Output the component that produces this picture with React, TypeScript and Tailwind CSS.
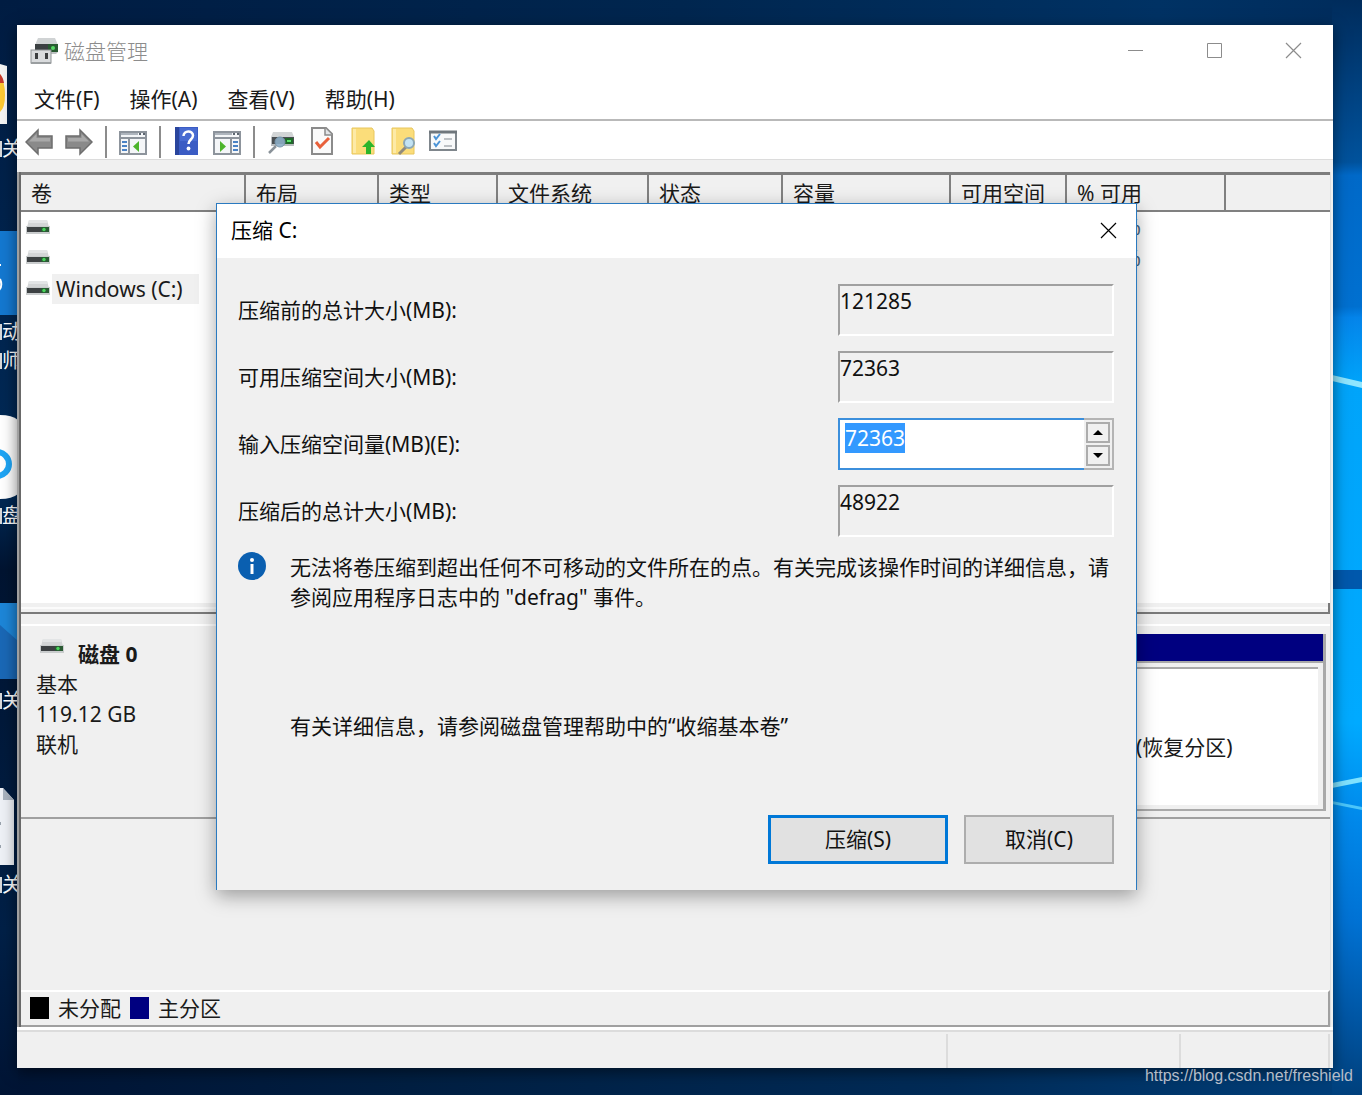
import { useEffect, useRef, useState } from 'react'

const columns = [
  { name: '卷', width: 'w-[224px]' },
  { name: '布局', width: 'w-[133px]' },
  { name: '类型', width: 'w-[119px]' },
  { name: '文件系统', width: 'w-[151px]' },
  { name: '状态', width: 'w-[134px]' },
  { name: '容量', width: 'w-[168px]' },
  { name: '可用空间', width: 'w-[116px]' },
  { name: '% 可用', width: 'w-[159px]' },
  { name: '', width: '' },
]

const volumes = [
  { name: '', free: '100 %' },
  { name: '', free: '100 %' },
  { name: 'Windows (C:)', free: '' },
]

const menus = ['文件(F)', '操作(A)', '查看(V)', '帮助(H)']

function DriveIcon() {
  return (
    <svg width="24" height="16" viewBox="0 0 24 16" className="shrink-0">
      <path d="M3 0h18l2 7H1z" fill="#d3d5d6" />
      <path d="M3 0h18l.6 3H2.4z" fill="#e3e5e6" />
      <rect x="0" y="6" width="24" height="8" fill="#c9cccd" />
      <rect x="1" y="7" width="22" height="5" fill="#3d4143" />
      <rect x="15" y="7" width="8" height="5" fill="#2a5a33" />
      <circle cx="18" cy="9.500" r="1.700" fill="#49d65c" />
    </svg>
  )
}

function AppIcon() {
  return (
    <svg width="28" height="28" viewBox="0 0 28 28" className="shrink-0">
      <path d="M8 1h17l3 7H5z" fill="#d0d3d4" />
      <rect x="5" y="7" width="23" height="8" fill="#3c4143" />
      <path d="M18 7h10v8H18z" fill="#285a31" />
      <circle cx="23" cy="11" r="2" fill="#55d964" />
      <path d="M5 15h23l-2 2H5z" fill="#bfc2c3" />
      <rect x="1" y="13" width="20" height="13" fill="#d9dbdd" stroke="#8f9496" />
      <path d="M1 25h20v2H1z" fill="#9a9ea0" />
      <rect x="5" y="16" width="3" height="6" fill="#3b3d3f" />
      <rect x="15" y="16" width="3" height="6" fill="#3b3d3f" />
    </svg>
  )
}

function ArrowIcon({ flip = false }: { flip?: boolean }) {
  return (
    <svg width="28" height="30" viewBox="0 0 28 30" className={flip ? '-scale-x-100' : ''}>
      <path d="M1 15 13 3v6h14v12H13v6z" fill="#8a8a8a" stroke="#6e6e6e" strokeWidth="1.500" />
      <path d="M4 14.500 11.500 7v4H25v3.500z" fill="#a9a9a9" />
    </svg>
  )
}

function PanelIcon({ right = false }: { right?: boolean }) {
  return (
    <svg width="28" height="30" viewBox="0 0 28 30">
      <rect x="1" y="5" width="26" height="22" fill="#f4f6f8" stroke="#8d949c" strokeWidth="2" />
      <path d="M2 7h17" stroke="#aeb5bd" strokeWidth="2" />
      <path d="M20 7h2M24 7h2" stroke="#5d6670" strokeWidth="2" />
      <path d="M1 11h26" stroke="#8d949c" strokeWidth="2" />
      {right ? (
        <>
          <path d="M18 12v15" stroke="#8d949c" strokeWidth="2" />
          <path d="M20 15h5M20 19h5M20 23h5" stroke="#4a82c4" strokeWidth="2" />
          <path d="M7 14v11l6-5.500z" fill="#4cb42c" />
        </>
      ) : (
        <>
          <path d="M10 12v15" stroke="#8d949c" strokeWidth="2" />
          <path d="M3 15h5M3 19h5M3 23h5" stroke="#4a82c4" strokeWidth="2" />
          <path d="M20 14v11l-6-5.500z" fill="#4cb42c" />
        </>
      )}
    </svg>
  )
}

function HelpIcon() {
  return (
    <svg width="28" height="30" viewBox="0 0 28 30">
      <rect x="2" y="0" width="23" height="28" fill="#3b5cc4" />
      <rect x="2" y="0" width="4" height="28" fill="#2a459d" />
      <path d="M7 1h17v13H7z" fill="#5275da" opacity=".6" />
      <path d="M10.500 9c0-6 9.500-6 9.500-.5 0 4-4.500 4-4.500 8.500" fill="none" stroke="#fff" strokeWidth="2.500" />
      <circle cx="15.500" cy="21.500" r="1.900" fill="#fff" />
    </svg>
  )
}

function DiskSearchIcon() {
  return (
    <svg width="28" height="30" viewBox="0 0 28 30">
      <path d="M6 5h19l2 5H4z" fill="#d2d5d6" />
      <rect x="4" y="10" width="23" height="9" fill="#b9bdbf" />
      <rect x="5" y="10" width="22" height="7" fill="#4a4f52" />
      <rect x="18" y="11" width="8" height="6" fill="#1f6a2a" />
      <path d="M20 14h4" stroke="#5be36b" strokeWidth="2" />
      <path d="m9 19-7 7" stroke="#8a9299" strokeWidth="2.500" />
      <circle cx="13" cy="15" r="5" fill="#8fb3cc" fillOpacity=".85" stroke="#7896ab" />
    </svg>
  )
}

function CheckDocIcon() {
  return (
    <svg width="28" height="30" viewBox="0 0 28 30">
      <path d="M5 1h14l6 6v20H5z" fill="#fafafa" stroke="#8b8b8b" strokeWidth="2" />
      <path d="M18 1v7h7" fill="#e2e5e8" stroke="#8b8b8b" strokeWidth="1.500" />
      <path d="m9 15 4 5 9-9" fill="none" stroke="#e8603a" strokeWidth="3" />
    </svg>
  )
}

function FolderUpIcon() {
  return (
    <svg width="28" height="30" viewBox="0 0 28 30">
      <path d="M5 1h20l2 3v23H5z" fill="#fbdd7a" stroke="#e8c65c" />
      <path d="M6 2h3v24H6z" fill="#fdeaa6" />
      <path d="m22 13 6 7h-4v7h-5v-7h-4z" fill="#2bb52b" />
    </svg>
  )
}

function FolderSearchIcon() {
  return (
    <svg width="28" height="30" viewBox="0 0 28 30">
      <path d="M5 1h20l2 3v23H5z" fill="#fbdd7a" stroke="#e8c65c" />
      <path d="M6 2h3v24H6z" fill="#fdeaa6" />
      <path d="m19 20-7 7" stroke="#918b7c" strokeWidth="3" />
      <circle cx="22" cy="16" r="5" fill="#c3e3f3" stroke="#8ca7b5" strokeWidth="2" />
    </svg>
  )
}

function ListIcon() {
  return (
    <svg width="30" height="30" viewBox="0 0 30 30">
      <rect x="3" y="5" width="26" height="18" fill="#f8f9fa" stroke="#7f868c" strokeWidth="2" />
      <path d="M2 5h28" stroke="#6f767c" strokeWidth="3" />
      <path d="m7 9 2 3 4-5M7 16l2 3 4-5" fill="none" stroke="#4b93d6" strokeWidth="2" />
      <path d="M17 12h8M17 19h8" stroke="#bdc1c5" strokeWidth="2" />
    </svg>
  )
}

function CloseIcon() {
  return (
    <svg width="17" height="17" viewBox="0 0 17 17">
      <path d="m1 1 15 15M16 1 1 16" stroke="currentColor" strokeWidth="1.200" />
    </svg>
  )
}

function Wallpaper() {
  return (
    <svg className="absolute inset-0 h-full w-full" viewBox="0 0 1362 1095" preserveAspectRatio="none">
      <defs>
        <linearGradient id="top" x1="0" x2="1" y1="0" y2="0">
          <stop offset="0" stopColor="#001c42" />
          <stop offset=".5" stopColor="#00264f" />
          <stop offset=".85" stopColor="#003264" />
          <stop offset="1" stopColor="#002c5c" />
        </linearGradient>
        <linearGradient id="bottom" x1="0" x2="1" y1="0" y2="0">
          <stop offset="0" stopColor="#001434" />
          <stop offset=".3" stopColor="#001f42" />
          <stop offset=".7" stopColor="#002b57" />
          <stop offset="1" stopColor="#00407c" />
        </linearGradient>
        <linearGradient id="left" x1="0" x2="0" y1="0" y2="1">
          <stop offset="0" stopColor="#001c42" />
          <stop offset=".45" stopColor="#002a57" />
          <stop offset=".52" stopColor="#001431" />
          <stop offset=".85" stopColor="#002047" />
          <stop offset="1" stopColor="#001434" />
        </linearGradient>
        <linearGradient id="right" x1="0" x2="0" y1="0" y2="1">
          <stop offset="0" stopColor="#002c5c" />
          <stop offset=".148" stopColor="#00529c" />
          <stop offset=".16" stopColor="#0069c8" />
          <stop offset=".28" stopColor="#0070d0" />
          <stop offset=".29" stopColor="#0484ea" />
          <stop offset=".35" stopColor="#00a4fa" />
          <stop offset=".66" stopColor="#00aaff" />
          <stop offset=".75" stopColor="#0088ea" />
          <stop offset=".84" stopColor="#0072d4" />
          <stop offset=".93" stopColor="#0056a4" />
          <stop offset="1" stopColor="#00407c" />
        </linearGradient>
      </defs>
      <rect width="1362" height="548" fill="url(#top)" />
      <rect y="548" width="1362" height="547" fill="url(#bottom)" />
      <rect width="18" height="1095" fill="url(#left)" />
      <rect x="1332" width="30" height="1095" fill="url(#right)" />
      <rect x="1332" y="570" width="30" height="19" fill="#0058ac" />
      <path d="m1332 375 30 7v6l-30-7z" fill="#8fe6ff" />
      <path d="m1332 783 30-6v5l-30 6z" fill="#7fe2ff" />
      <path d="m1332 801 30 6v3l-30-6z" fill="#4cc6fa" />
    </svg>
  )
}

function DesktopLabel({ text, className }: { text: string; className: string }) {
  return (
    <div className={`absolute left-0 flex items-center text-[20px] leading-[28px] text-white ${className}`}>
      <span className="h-4 w-0.5 bg-[#d9d9d9]" />
      {text}
    </div>
  )
}

function Desktop() {
  return (
    <div className="absolute inset-0 overflow-hidden">
      <Wallpaper />
      <svg className="absolute top-[64px] left-0" width="7" height="60" viewBox="0 0 7 60">
        <path d="M0 0 7 2v58H0z" fill="#f4f4f4" />
        <path d="M0 10q5 8 5 21T0 48z" fill="#fcc934" />
        <path d="M0 10q3 3 4 9H0z" fill="#c5392c" />
      </svg>
      <DesktopLabel text="关" className="top-[135px]" />
      <svg className="absolute top-[231px] left-0" width="18" height="84" viewBox="0 0 18 84">
        <rect width="18" height="84" fill="#1478d0" />
        <path d="M0 35v-2M0 48q3 7-1 11" fill="none" stroke="#fff" strokeWidth="2" />
      </svg>
      <DesktopLabel text="动" className="top-[318px]" />
      <DesktopLabel text="师" className="top-[347px]" />
      <svg className="absolute top-[415px] left-0" width="18" height="84" viewBox="0 0 18 84">
        <path d="M0 0q12 0 18 5v74q-6 5-18 5z" fill="#fff" />
        <circle cx="-3" cy="49" r="12" fill="none" stroke="#1ea5f5" strokeWidth="6" />
      </svg>
      <DesktopLabel text="盘" className="top-[502px]" />
      <svg className="absolute top-[603px] left-0" width="18" height="76" viewBox="0 0 18 76">
        <rect width="18" height="76" fill="#1d86d8" />
        <path d="m0 22 18 16v38H0z" fill="#1a68b6" />
      </svg>
      <DesktopLabel text="关" className="top-[687px]" />
      <svg className="absolute top-[788px] left-0" width="14" height="77" viewBox="0 0 14 77">
        <path d="M0 0h3l11 12v65H0z" fill="#eef1f6" />
        <path d="M3 0v12h11z" fill="#a9b3bf" />
        <path d="M0 34v3M0 57v3" stroke="#9aa3ad" strokeWidth="2" />
      </svg>
      <DesktopLabel text="关" className="top-[871px]" />
    </div>
  )
}

function ResultRow({ id, label, value }: { id: string; label: string; value: number }) {
  return (
    <div className="flex items-center justify-between">
      <label htmlFor={id}>{label}</label>
      <output
        id={id}
        className="block h-[52px] w-[276px] border-2 border-t-[#a0a0a0] border-r-white border-b-white border-l-[#a0a0a0]"
      >
        {value}
      </output>
    </div>
  )
}

function ShrinkDialog() {
  const total = 121285
  const available = 72363
  const [amount, setAmount] = useState(available)
  const inputRef = useRef<HTMLInputElement>(null)

  useEffect(() => {
    inputRef.current?.focus()
    inputRef.current?.select()
  }, [])

  const step = (delta: number) => setAmount((n) => Math.min(available, Math.max(0, n + delta)))

  return (
    <div
      role="dialog"
      aria-label="压缩 C:"
      className="absolute top-[178px] left-[199px] w-[921px] border border-b-0 border-[#2a7ac0] bg-[#f0f0f0] text-[#111111] shadow-[0_6px_18px_rgba(0,0,0,0.35)]"
    >
      <div className="flex h-[54px] items-center justify-between bg-white pr-[19px] pb-0.5 pl-3.5 text-black">
        <h2>压缩 C:</h2>
        <button aria-label="关闭">
          <CloseIcon />
        </button>
      </div>

      <form className="pt-[26px] pr-[22px] pb-[26px] pl-[21px]" onSubmit={(e) => e.preventDefault()}>
        <div className="flex flex-col gap-[15px]">
          <ResultRow id="total" label="压缩前的总计大小(MB):" value={total} />
          <ResultRow id="available" label="可用压缩空间大小(MB):" value={available} />
          <div className="flex items-center justify-between">
            <label htmlFor="amount">输入压缩空间量(MB)(E):</label>
            <div className="flex h-[52px] w-[276px]">
              <input
                id="amount"
                ref={inputRef}
                value={amount}
                onChange={(e) => setAmount(Number(e.target.value) || 0)}
                className="min-w-0 flex-1 border-2 border-r-0 border-[#3c8fdc] bg-white px-[5px] pt-[3px] pb-[15px] outline-none selection:bg-[#3399ff] selection:text-white"
              />
              <div className="flex w-[30px] flex-col gap-0.5 border-2 border-l-0 border-[#b4b4b4] p-0.5">
                <button
                  type="button"
                  aria-label="增加"
                  onClick={() => step(1)}
                  className="flex flex-1 items-center justify-center border-2 border-[#acacac]"
                >
                  <svg width="10" height="5" viewBox="0 0 10 5">
                    <path d="m5 0 5 5H0z" />
                  </svg>
                </button>
                <button
                  type="button"
                  aria-label="减少"
                  onClick={() => step(-1)}
                  className="flex flex-1 items-center justify-center border-2 border-[#acacac]"
                >
                  <svg width="10" height="5" viewBox="0 0 10 5">
                    <path d="m5 5 5-5H0z" />
                  </svg>
                </button>
              </div>
            </div>
          </div>
          <ResultRow id="after" label="压缩后的总计大小(MB):" value={total - amount} />
        </div>

        <div className="mt-[15px] flex gap-6">
          <svg width="28" height="28" viewBox="0 0 28 28" className="shrink-0">
            <circle cx="14" cy="14" r="14" fill="#0a5fb0" />
            <circle cx="14" cy="8" r="2" fill="#fff" />
            <path d="M14 12v10" stroke="#fff" strokeWidth="3" />
          </svg>
          <p>
            无法将卷压缩到超出任何不可移动的文件所在的点。有关完成该操作时间的详细信息，请
            <br />
            参阅应用程序日志中的 "defrag" 事件。
          </p>
        </div>

        <p className="mt-[99px] pl-[52px]">有关详细信息，请参阅磁盘管理帮助中的“收缩基本卷”</p>

        <div className="mt-[74px] flex justify-end gap-4">
          <button type="submit" className="h-[49px] w-[180px] border-3 border-[#0078d7] bg-[#e1e1e1] pb-0.5">
            压缩(S)
          </button>
          <button type="button" className="h-[49px] w-[150px] border-2 border-[#adadad] bg-[#e1e1e1] pb-0.5">
            取消(C)
          </button>
        </div>
      </form>
    </div>
  )
}

export default function App() {
  return (
    <div className="relative flex min-h-screen flex-col overflow-hidden pt-[25px] pr-[29px] pb-[27px] pl-[17px] font-['Noto_Sans','Noto_Sans_CJK_SC',sans-serif] text-[21px] leading-[30px]">
      <Desktop />

      <main className="relative flex flex-1 flex-col bg-[#f0f0f0] text-[#1a1a1a] shadow-[0_4px_14px_rgba(0,0,0,0.5)]">
        <header className="flex h-[52px] items-center gap-1.5 bg-white pl-[13px] text-[#8c8c8c]">
          <AppIcon />
          <h1 className="flex-1 font-light">磁盘管理</h1>
          <div className="flex gap-[62px] pr-[31px] pb-0.5">
            <button aria-label="最小化">
              <svg width="17" height="17" viewBox="0 0 17 17">
                <path d="M1 8.500h15" stroke="currentColor" />
              </svg>
            </button>
            <button aria-label="最大化">
              <svg width="17" height="17" viewBox="0 0 17 17">
                <path d="M1.500 1.500h14v14h-14z" fill="none" stroke="currentColor" />
              </svg>
            </button>
            <button aria-label="关闭">
              <CloseIcon />
            </button>
          </div>
        </header>

        <nav className="flex h-[44px] gap-[30px] border-b-2 border-[#b9b9b9] bg-white pt-[7px] pl-[17px]">
          {menus.map((menu) => (
            <button key={menu} className="self-start">
              {menu}
            </button>
          ))}
        </nav>

        <div className="flex h-[39px] items-center gap-3 border-b border-[#dcdcdc] bg-white pt-1 pl-2">
          <button aria-label="后退"><ArrowIcon /></button>
          <button aria-label="前进"><ArrowIcon flip /></button>
          <span className="h-8 w-0.5 bg-[#8c8c8c]" />
          <button aria-label="显示控制台树"><PanelIcon /></button>
          <span className="h-8 w-0.5 bg-[#8c8c8c]" />
          <button aria-label="帮助"><HelpIcon /></button>
          <button aria-label="显示操作窗格"><PanelIcon right /></button>
          <span className="h-8 w-0.5 bg-[#8c8c8c]" />
          <button aria-label="重新扫描"><DiskSearchIcon /></button>
          <button aria-label="属性"><CheckDocIcon /></button>
          <button aria-label="上移"><FolderUpIcon /></button>
          <button aria-label="查找"><FolderSearchIcon /></button>
          <button aria-label="列表"><ListIcon /></button>
        </div>

        <div className="mt-3 flex flex-1 flex-col border-l-2 border-[#a0a0a0]">
          <div className="mr-0.5 flex flex-1 flex-col border-r border-l-2 border-r-[#e0e0e0] border-l-[#696969]">
            <section className="flex h-[442px] flex-col border-t-3 border-b-2 border-t-[#7d7d7d] border-b-[#7a7a7a]">
              <div className="flex-1 bg-white">
                <table className="w-full table-fixed border-collapse text-left">
                  <thead>
                    <tr className="h-9 border-b-2 border-[#808080] bg-[#f0f0f0]">
                      {columns.map((col, i) => (
                        <th
                          key={i}
                          className={`${col.width} border-r-2 border-[#808080] pt-1 pl-2.5 align-top font-normal leading-[28px] whitespace-nowrap last:border-r-0`}
                        >
                          {col.name}
                        </th>
                      ))}
                    </tr>
                  </thead>
                  <tbody>
                    {volumes.map((volume, i) => (
                      <tr key={i} className="h-[31px]">
                        <td className="p-0 pt-px pl-[5px]" colSpan={7}>
                          <div className="flex items-center gap-0.5">
                            <DriveIcon />
                            {volume.name && <span className="bg-[#f0f0f0] pr-4 pl-1">{volume.name}</span>}
                          </div>
                        </td>
                        <td className="p-0 pl-4 text-[#4a647c]">{volume.free}</td>
                        <td />
                      </tr>
                    ))}
                  </tbody>
                </table>
              </div>
              <div className="h-[9px] border-r-2 border-[#7a7a7a] bg-[#f0f0f0] pt-1">
                <div className="h-0.5 bg-[#fbfbfb]" />
              </div>
            </section>

            <section className="mt-2.5 flex h-[195px] justify-between border-t-2 border-b-2 border-t-white border-b-[#a0a0a0]">
              <div className="pt-3 pl-[15px]">
                <div className="flex gap-3.5 pt-px pl-1">
                  <DriveIcon />
                  <h3 className="font-bold">磁盘 0</h3>
                </div>
                <p>基本</p>
                <p>119.12 GB</p>
                <p>联机</p>
              </div>
              <div className="mt-2 mr-1 flex h-[177px] w-[250px] flex-col border-r-3 border-b-2 border-[#a9a9a9]">
                <div className="h-[29px] border-b-2 border-[#a9a9a9] bg-[#000080]" />
                <div className="mt-1 mr-[5px] mb-1 flex-1 border-t-2 border-[#a9a9a9] bg-white pt-[63px] pl-[60px]">
                  (恢复分区)
                </div>
              </div>
            </section>

            <div className="flex-1" />

            <footer className="flex h-[37px] items-center gap-[9px] border-t-2 border-r-2 border-b-2 border-t-white border-r-[#a0a0a0] border-b-[#a0a0a0] pb-0.5 pl-[9px]">
              <span className="h-[22px] w-[19px] bg-black" />
              <span>未分配</span>
              <span className="h-[22px] w-[19px] bg-[#000080]" />
              <span>主分区</span>
            </footer>
          </div>
        </div>

        <div className="border-t-3 border-white">
          <div className="flex h-[38px] border-t-2 border-[#dcdcdc] pt-0.5 pr-[3px]">
            <div className="flex-1 border-r-2 border-[#dcdcdc]" />
            <div className="w-[233px] border-r-2 border-[#dcdcdc]" />
            <div className="w-[149px] border-r-2 border-[#dcdcdc]" />
          </div>
        </div>

        <ShrinkDialog />
      </main>

      <a
        href="https://blog.csdn.net/freshield"
        className="absolute right-[9px] bottom-[7px] font-['Liberation_Sans',sans-serif] text-[16px] leading-6 text-[#b4bcc8]"
      >
        https://blog.csdn.net/freshield
      </a>
    </div>
  )
}
